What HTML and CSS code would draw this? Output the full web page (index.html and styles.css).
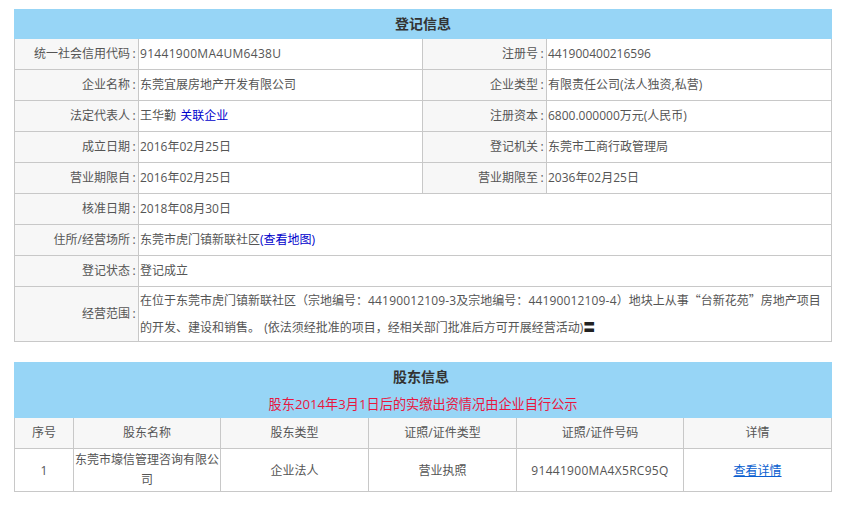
FILE: index.html
```html
<!DOCTYPE html>
<html lang="zh-CN">
<head>
<meta charset="utf-8">
<title>登记信息</title>
<link rel="stylesheet" href="styles.css">
</head>
<body>
<div class="page">
<table class="tbl reg">
  <colgroup><col class="c1"><col class="c2"><col class="c3"><col class="c4"></colgroup>
  <tr class="head"><th colspan="4">登记信息</th></tr>
  <tr><td class="lab">统一社会信用代码<span class="colon">:</span></td><td><span class="code">91441900MA4UM6438U</span></td><td class="lab">注册号<span class="colon">:</span></td><td>441900400216596</td></tr>
  <tr><td class="lab">企业名称<span class="colon">:</span></td><td>东莞宜展房地产开发有限公司</td><td class="lab">企业类型<span class="colon">:</span></td><td>有限责任公司(法人独资,私营)</td></tr>
  <tr><td class="lab">法定代表人<span class="colon">:</span></td><td>王华勤 <a class="rel assoc" href="#">关联企业</a></td><td class="lab">注册资本<span class="colon">:</span></td><td>6800.000000万元(人民币)</td></tr>
  <tr><td class="lab">成立日期<span class="colon">:</span></td><td>2016年02月25日</td><td class="lab">登记机关<span class="colon">:</span></td><td>东莞市工商行政管理局</td></tr>
  <tr><td class="lab">营业期限自<span class="colon">:</span></td><td>2016年02月25日</td><td class="lab">营业期限至<span class="colon">:</span></td><td>2036年02月25日</td></tr>
  <tr><td class="lab">核准日期<span class="colon">:</span></td><td colspan="3">2018年08月30日</td></tr>
  <tr><td class="lab">住所/经营场所<span class="colon">:</span></td><td colspan="3">东莞市虎门镇新联社区<a class="rel" href="#">(查看地图)</a></td></tr>
  <tr><td class="lab">登记状态<span class="colon">:</span></td><td colspan="3">登记成立</td></tr>
  <tr class="tall"><td class="lab">经营范围<span class="colon">:</span></td><td colspan="3" class="scope">在位于东莞市虎门镇新联社区<span class="fw">（</span>宗地编号<span class="fw">：</span><span class="lot">44190012109-3</span>及宗地编号<span class="fw">：</span><span class="lot">44190012109-4</span><span class="fw">）</span>地块上从事<span class="qt">“</span>台新花苑<span class="qt">”</span>房地产项目的开发<span class="qt">、</span>建设和销售<span class="qt">。</span> (依法须经批准的项目<span class="fw">，</span>经相关部门批准后方可开展经营活动)<span class="eq">〓</span></td></tr>
</table>

<table class="tbl holders">
  <colgroup><col class="h1"><col class="h2"><col class="h3"><col class="h4"><col class="h5"><col class="h6"></colgroup>
  <tr class="head2"><th colspan="6"><div class="t">股东信息</div><div class="warn">股东2014年3月1日后的实缴出资情况由企业自行公示</div></th></tr>
  <tr class="cols"><td>序号</td><td>股东名称</td><td>股东类型</td><td>证照/证件类型</td><td>证照/证件号码</td><td>详情</td></tr>
  <tr class="data"><td>1</td><td class="name">东莞市壕信管理咨询有限公司</td><td>企业法人</td><td>营业执照</td><td><span class="code">91441900MA4X5RC95Q</span></td><td><a class="more" href="#">查看详情</a></td></tr>
</table>
</div>
</body>
</html>
```
FILE: styles.css
```css
* { box-sizing: border-box; }
html, body { margin: 0; padding: 0; background: #fff; }
body {
  font-family: "Open Sans", "Noto Sans CJK SC", sans-serif;
  font-size: 12px;
  color: #555;
}
.page { padding: 9px 14px 0 14px; width: 845px; }
.tbl {
  border-collapse: collapse;
  table-layout: fixed;
  width: 818px;
}
.tbl td, .tbl th { border: 1px solid #c8c8c8; padding: 0 0 2px; }
.reg { margin-bottom: 20px; }
.c1 { width: 124px; }
.c2 { width: 284px; }
.c3 { width: 124px; }
.c4 { width: 285px; }
.head th {
  background: #97d5f6;
  border-color: #97d5f6;
  font-size: 14px;
  color: #333;
  text-align: center;
  line-height: 20px;
  padding: 0;
}
.reg tr { height: 31px; }
.reg .head { height: 29px; }
.reg .tall { height: 54px; }
.reg td { padding-left: 1px; }
.lab {
  background: #f7f7f7;
  text-align: right;
}
.reg td.lab { padding-left: 0; padding-right: 0; }
.colon { display: inline-block; width: 8px; text-align: center; }
.code { letter-spacing: 0.3px; }
.lot { letter-spacing: 0.16px; }
.reg td.scope { line-height: 27px; padding: 0 6px 0 1px; word-spacing: 1px; }
.fw, .qt, .eq { line-height: 1; }
.fw { font-family: "Noto Sans CJK TC", sans-serif; }
.qt { font-family: "Noto Sans CJK SC", sans-serif; }
.eq { color: #222; font-weight: bold; }
.rel { color: #0000cc; text-decoration: none; }
.assoc { margin-left: 1px; }
.h1 { width: 59px; }
.h2 { width: 147px; }
.h3 { width: 148px; }
.h4 { width: 148px; }
.h5 { width: 167px; }
.h6 { width: 148px; }
.head2 th {
  background: #97d5f6;
  border-color: #97d5f6;
  height: 55px;
  text-align: center;
  font-weight: normal;
  padding: 0;
}
.t { font-size: 14px; font-weight: bold; color: #333; line-height: 28px; padding-right: 4px; }
.warn { font-size: 13.2px; color: #e8173f; line-height: 26px; }
.cols td {
  background: #f7f7f7;
  height: 31px;
  text-align: center;
}
.tbl .data td { height: 43px; text-align: center; padding-bottom: 0; }
.data .name { line-height: 20px; }
.more { color: #0b5fd0; text-decoration: underline; }
```
